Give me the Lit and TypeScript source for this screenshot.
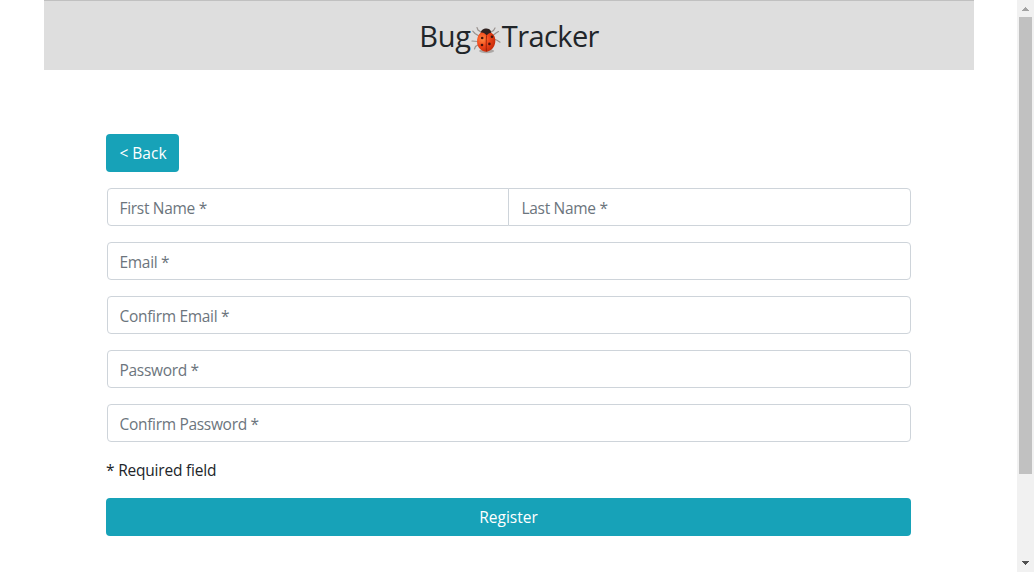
import { LitElement, html, css, svg } from "lit";
import { customElement } from "lit/decorators.js";

@customElement("bug-icon")
class BugIcon extends LitElement {
  static styles = css`
    :host { display: block; width: 30px; height: 28px; }
    svg { display: block; }
  `;
  render() {
    const spots = [[11.2, 12], [21, 10.8], [11, 19], [18.4, 17.9]];
    return html`<svg width="30" height="28" viewBox="0 0 30 28">
      <defs>
        <radialGradient id="shell" cx="0.3" cy="0.35" r="0.75">
          <stop offset="0" stop-color="#ff8a42"></stop>
          <stop offset="0.45" stop-color="#f34a1c"></stop>
          <stop offset="1" stop-color="#c32808"></stop>
        </radialGradient>
      </defs>
      <g fill="none" stroke="#99928e" stroke-width="1.2" stroke-linecap="round">
        <path d="M10 6 L7 4 L6 1.5"></path>
        <path d="M20 6 L22.5 4.5 L24 2"></path>
        <path d="M8 10 L4 7.5 L1.8 5.2"></path>
        <path d="M22 9.5 L25 7 L27.5 5.6"></path>
        <path d="M6.5 15.5 L1 15"></path>
        <path d="M24 13.5 L26 14.2 L29 16.2"></path>
        <path d="M7 19 L4.5 20.5 L3.5 23"></path>
      </g>
      <ellipse cx="15.6" cy="25" rx="7.5" ry="2.2" fill="#77706c" opacity="0.5"></ellipse>
      <path d="M9.8 7.5 C9.5 4.2 12.8 2.4 15.7 2.6 C19 2.8 20.7 5 20 8.5 L15.3 11 Z" fill="#302220"></path>
      <path d="M10 6.4 C13 6.3 14.7 7.6 15.6 9.6 C16.8 7.9 18.4 6.8 20.4 6.8 C23.4 8.7 24.8 12.3 24.3 16.1 C23.6 21.8 19.5 25.6 15.3 25.7 C10.7 25.5 6.5 21.8 6.1 16.5 C5.8 12.2 7 8.3 10 6.4 Z" fill="url(#shell)"></path>
      <path d="M15.6 9.5 C15.1 14 15.2 20 15.4 25.5" fill="none" stroke="#8c1808" stroke-width="0.8"></path>
      ${spots.map(([x, y]) => svg`<circle cx=${x} cy=${y} r="1.3" fill="#45130b"></circle>`)}
    </svg>`;
  }
}

@customElement("page-scrollbar")
class PageScrollbar extends LitElement {
  static styles = css`
    :host {
      box-sizing: border-box; width: 17px; height: 572px; background: #f1f1f1;
      display: flex; flex-direction: column; align-items: center;
    }
    .arrow { display: block; width: 17px; height: 17px; }
    .track { flex: 1; }
    .thumb { width: 13px; height: 457px; background: #c1c1c1; }
  `;
  render() {
    return html`
      <svg class="arrow" viewBox="0 0 17 17" shape-rendering="crispEdges"><path d="M8 7h1v1h1v1h1v1h1v1H5v-1h1v-1h1v-1h1z" fill="#a3a3a3"></path></svg>
      <div class="track"><div class="thumb"></div></div>
      <svg class="arrow" viewBox="0 0 17 17" shape-rendering="crispEdges"><path d="M5 6h7v1h-1v1h-1v1H9v1H8V9H7V8H6V7H5z" fill="#505050"></path></svg>`;
  }
}

@customElement("app-root")
class AppRoot extends LitElement {
  static styles = css`
    :host {
      display: flex; height: 572px; overflow: hidden; background: #fff; color: #212529;
      font: 400 15.5px/24px "Open Sans", "Noto Sans", sans-serif;
    }
    .page { flex: 1; padding: 0 43px 0 44px; }
    header {
      box-sizing: border-box; height: 70px; border-top: 1px solid #c0c0c0; background: #dedede;
      display: flex; justify-content: center; padding-top: 16px;
    }
    h1 { margin: 0; display: flex; font-weight: 400; font-size: 29px; line-height: 38px; }
    .bug { letter-spacing: -0.2px; }
    .tracker { letter-spacing: -0.6px; }
    bug-icon { margin: 9px 1px 0 0; }
    form { padding: 64px 63px 0 62px; display: flex; flex-direction: column; align-items: stretch; }
    button {
      height: 38px; border: 0; border-radius: 4px; background: #17a2b8; color: #fff;
      font: inherit; padding: 0;
    }
    .back { width: 73px; align-self: flex-start; margin-bottom: 16px; padding-left: 1px; }
    .row { display: flex; margin: 0 0 16px 1px; }
    input {
      box-sizing: border-box; flex: 1; min-width: 0; height: 38px; border: 1px solid #ced4da;
      border-radius: 4px; padding: 2px 12px 0 11.5px; background: #fff; font: inherit; outline: 0;
      letter-spacing: -0.31px;
    }
    input::placeholder { color: #6c757d; opacity: 1; }
    .first { flex: 0 0 402px; border-radius: 4px 0 0 4px; }
    .last { margin-left: -1px; border-radius: 0 4px 4px 0; padding-left: 12.5px; }
    .note { margin: 0 0 16px; letter-spacing: -0.2px; }
  `;
  render() {
    return html`
      <div class="page">
        <header><h1><span class="bug">Bug</span><bug-icon></bug-icon><span class="tracker">Tracker</span></h1></header>
        <form>
          <button class="back" type="button">&lt; Back</button>
          <div class="row">
            <input class="first" placeholder="First Name *"><input class="last" placeholder="Last Name *">
          </div>
          ${["Email *", "Confirm Email *", "Password *", "Confirm Password *"].map(
            (label) => html`<div class="row"><input placeholder=${label}></div>`
          )}
          <p class="note">* Required field</p>
          <button class="register" type="button">Register</button>
        </form>
      </div>
      <page-scrollbar></page-scrollbar>`;
  }
}
